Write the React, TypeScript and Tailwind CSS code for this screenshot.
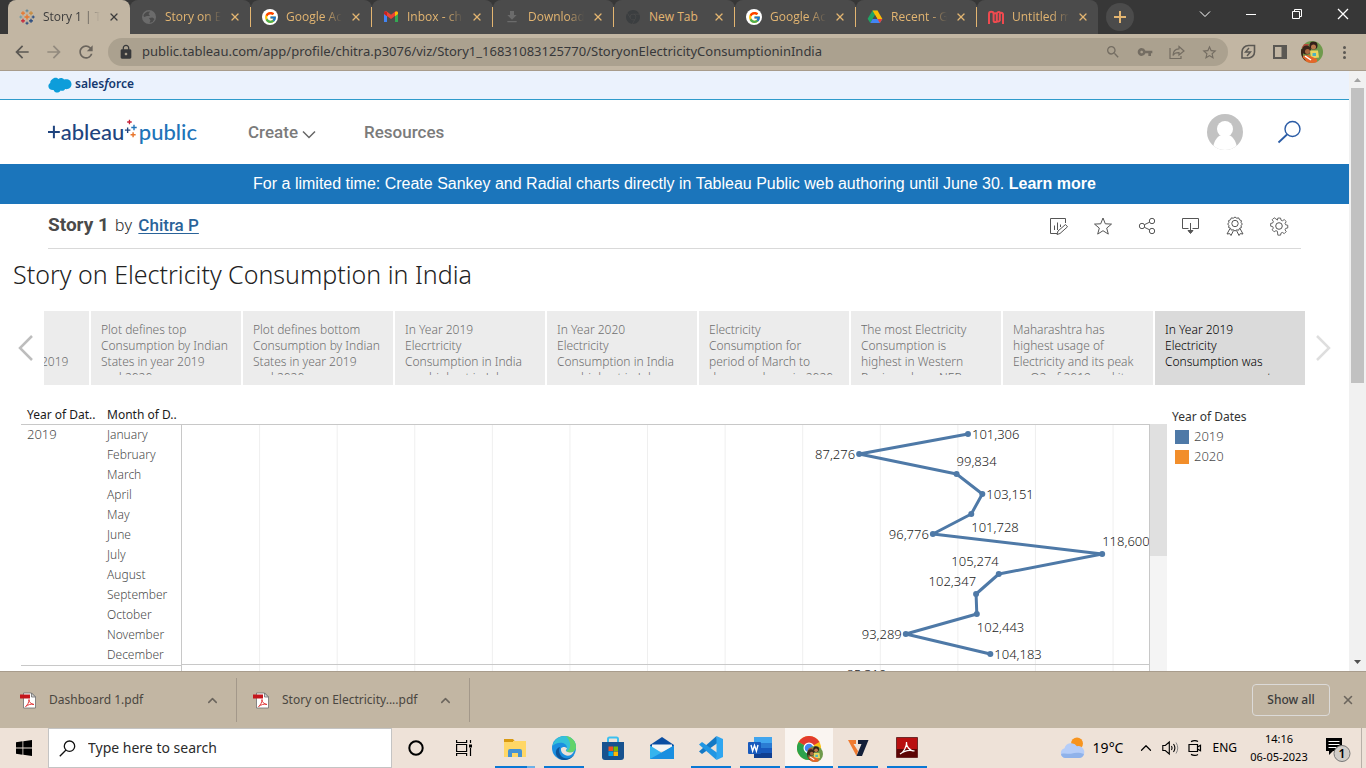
import type { ReactNode } from "react";
import { FcGoogle } from "react-icons/fc";
import { MdLock, MdSearch, MdVpnKey, MdStarBorder, MdFileDownload, MdRefresh, MdArrowBack, MdArrowForward } from "react-icons/md";
import { SiGooglechrome } from "react-icons/si";
import { ChevronUp, X } from "lucide-react";

/* ---------- browser chrome ---------- */

function Cross({ x, y, s, c, w = 1 }: { x: number; y: number; s: number; c: string; w?: number }) {
  return <path d={`M${x - s} ${y}H${x + s}M${x} ${y - s}V${y + s}`} stroke={c} strokeWidth={w} fill="none" />;
}

function TableauMark() {
  return (
    <svg width="16" height="16" viewBox="0 0 16 16" className="shrink-0" aria-hidden="true">
      <Cross x={8} y={8} s={2.5} c="#e8762d" w={1.4} />
      <Cross x={4} y={4.2} s={2} c="#e8762d" w={1.2} />
      <Cross x={12} y={4.2} s={2} c="#c78a3b" w={1.2} />
      <Cross x={4} y={11.8} s={2} c="#c72035" w={1.2} />
      <Cross x={12} y={11.8} s={2} c="#1f447e" w={1.2} />
      <Cross x={8} y={1.8} s={1.5} c="#5b879b" />
      <Cross x={8} y={14.2} s={1.5} c="#1f447e" />
      <Cross x={1.8} y={8} s={1.5} c="#7199a6" />
      <Cross x={14.2} y={8} s={1.5} c="#1f447e" />
    </svg>
  );
}

function Globe() {
  return (
    <svg width="16" height="16" viewBox="0 0 16 16" aria-hidden="true">
      <circle cx="8" cy="8" r="7" fill="#6b6b6b" />
      <path d="M2.500 6.500C4 3 6.500 2.500 9 2.500L7.500 5l1.500 2H6L3 8ZM8 9l3.500-.5 2 1.500-2 3-3 1 1-2.500Z" fill="#4b4b4b" />
    </svg>
  );
}

function GoogleDisc() {
  return (
    <span className="flex size-4 items-center justify-center rounded-full bg-white">
      <FcGoogle size={13} />
    </span>
  );
}

function Gmail() {
  return (
    <svg width="16" height="16" viewBox="0 0 16 16" aria-hidden="true">
      <path d="M1 4.500V13h3V6.500Z" fill="#4285f4" />
      <path d="M15 4.500V13h-3V6.500Z" fill="#34a853" />
      <path d="M1 3.800C1 2.300 2.700 1.700 3.800 2.500L8 5.700l4.200-3.200C13.300 1.700 15 2.300 15 3.800v1L8 10 1 4.800Z" fill="#ea4335" />
      <path d="M12 3v4.200l3-2.300V3.800C15 2.300 13 2 12 3Z" fill="#fbbc04" />
      <path d="M4 3v4.200L1 4.900V3.800C1 2.300 3 2 4 3Z" fill="#c5221f" />
    </svg>
  );
}

function Drive() {
  return (
    <svg width="16" height="16" viewBox="0 0 16 16" aria-hidden="true">
      <path d="M5.500 1.500h5L8 6 3.300 14 .6 9.800Z" fill="#21a464" />
      <path d="M10.500 1.500 15.400 10h-5L5.500 1.500Z" fill="#fbbc04" />
      <path d="M3.300 14 5.600 10h9.800l-2.500 4Z" fill="#4285f4" />
      <path d="m12.900 14 2.500-4h-4.900Z" fill="#ea4335" />
      <path d="M8 6.200 10.200 10H5.800Z" fill="#4b4b4b" />
    </svg>
  );
}

function MLogo() {
  return (
    <svg width="18" height="16" viewBox="0 0 18 16" className="shrink-0" aria-hidden="true">
      <path d="M2 15V5a2.300 2.300 0 0 1 4.600 0v6.500a1.600 1.600 0 0 0 3.200 0V5a2 2 0 0 1 3.400-1.400M6.600 5a2 2 0 0 1 3.200 0M9.800 11.500a1.600 1.600 0 0 0 3 0V5A1.700 1.700 0 0 1 16 5v10" fill="none" stroke="#ef4a4f" strokeWidth="2" />
    </svg>
  );
}

const tabs: { label: string; icon: ReactNode }[] = [
  { label: "Story on Electricity", icon: <Globe /> },
  { label: "Google Account", icon: <GoogleDisc /> },
  { label: "Inbox - chitra", icon: <Gmail /> },
  { label: "Downloads", icon: <MdFileDownload size={16} color="#6b6b6b" /> },
  { label: "New Tab", icon: <SiGooglechrome size={14} color="#3b3e40" /> },
  { label: "Google Account", icon: <GoogleDisc /> },
  { label: "Recent - Google Drive", icon: <Drive /> },
  { label: "Untitled mural", icon: <MLogo /> },
];

const fade = "min-w-0 flex-1 overflow-hidden whitespace-nowrap [mask-image:linear-gradient(to_right,black_70%,transparent_100%)]";

function TabStrip() {
  return (
    <div className="flex h-[34px] shrink-0 items-stretch bg-[#373737] pl-2 font-['Open_Sans','Noto_Sans',sans-serif] text-xs">
      <div className="flex w-[122px] items-center gap-2 rounded-t-lg bg-[#c2b6a3] pr-[10px] pl-[11px] text-[#3c3c3c]">
        <TableauMark />
        <span className={fade}>Story 1 | Tableau</span>
        <button aria-label="Close tab">
          <X size={12} strokeWidth={2.600} />
        </button>
      </div>
      {tabs.map((t, i) => (
        <div key={i} className="flex w-[121px] items-center rounded-t-lg bg-[#4b4b4b] text-[#e3b571]">
          <div className={"flex h-5 min-w-0 flex-1 items-center gap-2 pr-[9px] pl-[11px] " + (i < tabs.length - 1 ? "border-r border-[#e3b571]" : "")}>
            <span className="flex w-4 shrink-0 justify-center">{t.icon}</span>
            <span className={t.label.length > 8 ? fade : "flex-1 whitespace-nowrap"}>{t.label}</span>
            <button aria-label="Close tab">
              <X size={12} strokeWidth={2.600} />
            </button>
          </div>
        </div>
      ))}
      <button aria-label="New tab" className="ml-2 flex size-7 items-center justify-center self-center rounded-full bg-[#4b4b4b]">
        <svg width="14" height="14" viewBox="0 0 14 14">
          <path d="M1 7h12M7 1v12" stroke="#e3b571" strokeWidth="2" />
        </svg>
      </button>
      <div className="ml-auto flex items-start pt-2 text-white">
        <button aria-label="Search tabs" className="flex h-3 w-[46px] items-center justify-center">
          <svg width="12" height="12" viewBox="0 0 12 12"><path d="m1 3.500 5 5 5-5" fill="none" stroke="currentColor" /></svg>
        </button>
        <button aria-label="Minimize" className="flex h-3 w-[46px] items-center justify-center">
          <svg width="12" height="12" viewBox="0 0 12 12"><path d="M1 6.500h10" stroke="currentColor" /></svg>
        </button>
        <button aria-label="Restore" className="flex h-3 w-[46px] items-center justify-center">
          <svg width="12" height="12" viewBox="0 0 12 12"><path d="M1.500 3.500h7v7h-7ZM3.500 3.500v-2h7v7h-2" fill="none" stroke="currentColor" /></svg>
        </button>
        <button aria-label="Close" className="flex h-3 w-[46px] items-center justify-center">
          <svg width="12" height="12" viewBox="0 0 12 12"><path d="m1 1 10 10M11 1 1 11" stroke="currentColor" strokeWidth="1.300" /></svg>
        </button>
      </div>
    </div>
  );
}

function Photo({ size }: { size: number }) {
  return (
    <svg width={size} height={size} viewBox="0 0 22 22" aria-hidden="true">
      <clipPath id={`photo${size}`}><circle cx="11" cy="11" r="11" /></clipPath>
      <g clipPath={`url(#photo${size})`}>
        <rect width="22" height="22" fill="#6f9a4c" />
        <path d="M0 3h8l-2 4H0Z" fill="#b54a3a" />
        <circle cx="5.500" cy="9" r="4.500" fill="#3a2419" />
        <circle cx="6.500" cy="10.500" r="2.500" fill="#a8693f" />
        <circle cx="12.500" cy="4.500" r="4" fill="#33211a" />
        <circle cx="12.500" cy="6" r="2.500" fill="#b97a4c" />
        <path d="M9 9.500h8l1 7-8 1Z" fill="#ead45f" />
        <path d="M11.500 12h3.500v3h-3.500Z" fill="#4fb3c0" />
        <path d="M1 15l6-1 9 4v4H3Z" fill="#e5662a" />
        <path d="M4 15l6 4" stroke="#fff" strokeWidth="1.500" />
        <path d="M1 8v9l3 3" stroke="#3a2419" strokeWidth="2" fill="none" />
      </g>
    </svg>
  );
}

function Toolbar() {
  return (
    <div className="flex h-[37px] shrink-0 items-center border-b border-[#a89c8c] bg-[#c2b6a3] pr-[14px] pl-3 text-[#6b655d]">
      <div className="flex items-center gap-[12px]">
        <button aria-label="Back" className="flex w-5 justify-center text-[#5b5853]"><MdArrowBack size={20} /></button>
        <button aria-label="Forward" className="flex w-5 justify-center text-[#928a7e]"><MdArrowForward size={20} /></button>
        <button aria-label="Reload" className="flex w-5 justify-center"><MdRefresh size={20} /></button>
      </div>
      <div className="ml-3 flex h-7 min-w-0 flex-1 items-center rounded-full bg-[#aba18f] pr-[10px] pl-[10px]">
        <MdLock size={16} className="shrink-0 text-[#37383a]" />
        <input
          aria-label="Address"
          readOnly
          value="public.tableau.com/app/profile/chitra.p3076/viz/Story1_16831083125770/StoryonElectricityConsumptioninIndia"
          className="ml-2 min-w-0 flex-1 bg-transparent text-[13px] text-[#37383a] outline-none"
        />
        <div className="flex items-center gap-4 text-[#746d62]">
          <MdSearch size={16} />
          <MdVpnKey size={16} />
          <svg width="16" height="16" viewBox="0 0 16 16" fill="none" stroke="currentColor" strokeWidth="1.200">
            <path d="M1 4v10.500h11V12" />
            <path d="M10 2.500 15 7l-5 4V8.700C7 8.600 5 9.500 4 11.500 4 8 6 5 10 4.800Z" />
          </svg>
          <MdStarBorder size={17} />
        </div>
      </div>
      <div className="ml-3 flex items-center gap-4">
        <svg width="16" height="16" viewBox="0 0 16 16" fill="none" stroke="#5b5853" strokeWidth="1.600">
          <path d="M14.500 1.500v6.500a6 6 0 0 1-6.500 6H2V8a6.500 6.500 0 0 1 6.500-6.500Z" />
          <path d="m9 4-3.500 4h5L7 12" strokeWidth="1.400" />
        </svg>
        <svg width="16" height="16" viewBox="0 0 16 16" fill="none" stroke="#5b5853" strokeWidth="2">
          <path d="M2 2h12v12H2Z" />
          <path d="M11.500 2v12" strokeWidth="4" />
        </svg>
        <button aria-label="Profile" className="-mx-[3px]"><Photo size={22} /></button>
        <button aria-label="Menu" className="flex w-4 flex-col items-center gap-[2px]">
          <span className="size-[3px] rounded-full bg-[#5b5853]" />
          <span className="size-[3px] rounded-full bg-[#5b5853]" />
          <span className="size-[3px] rounded-full bg-[#5b5853]" />
        </button>
      </div>
    </div>
  );
}

/* ---------- page header ---------- */

function SalesforceBar() {
  return (
    <div className="flex h-[29px] items-center gap-[3px] border-b border-[#2f9bcb] bg-[#ebf2fd] px-12">
      <svg width="24" height="16" viewBox="0 0 24 16" className="mb-[1px]" aria-hidden="true">
        <path d="M4 2.500C6 .2 9 .4 10.400 2.100 12 .6 15 .8 16 2.600c3.500-1.300 7.500.6 7.500 4.600 0 3.500-3.300 5.500-6.300 4.800-1 1.800-3 2.200-4.600 1.500C11 16.400 6.800 16.300 5.600 13 2.500 13.300.3 11.500.4 9 .4 7.500 1.200 6.500 2.300 5.900 2 4.600 2.800 3.300 4 2.500Z" fill="#0d9dda" />
      </svg>
      <span className="mb-[2px] text-xs font-semibold text-[#14386f]">
        sales<i>f</i>orce
      </span>
    </div>
  );
}

function TableauLogo() {
  return (
    <a href="#home" aria-label="Tableau Public" className="flex w-[149px] items-center font-['Lato','Noto_Sans',sans-serif] text-[22px] leading-7 font-medium">
      <svg width="14" height="20" viewBox="0 0 14 20" aria-hidden="true">
        <path d="M0 10h13M6.500 3v14" stroke="#1f447e" strokeWidth="2.200" fill="none" />
      </svg>
      <span className="text-[#1f447e]">ableau</span>
      <svg width="16" height="28" viewBox="0 0 16 28" aria-hidden="true">
        <Cross x={6} y={3} s={2.5} c="#c72035" w={1.4} />
        <Cross x={4} y={12} s={3} c="#1f447e" w={1.5} />
        <Cross x={11} y={9} s={3} c="#2073b8" w={1.5} />
        <Cross x={10} y={17} s={2.8} c="#e8762d" w={1.6} />
      </svg>
      <span className="text-[#2073b8]">public</span>
    </a>
  );
}

function SiteHeader() {
  return (
    <header className="flex h-16 items-center px-12">
      <TableauLogo />
      <nav className="ml-[51px] flex items-center gap-12 pt-px font-['Roboto',sans-serif] text-[17px] font-medium text-[#7b7b7b]">
        <button className="flex items-center gap-1">
          Create
          <svg width="14" height="10" viewBox="0 0 14 10" className="mt-1"><path d="m1 1.500 6 6 6-6" fill="none" stroke="#666" strokeWidth="1.500" /></svg>
        </button>
        <a href="#resources">Resources</a>
      </nav>
      <div className="ml-auto flex items-center gap-[34px]">
        <button aria-label="Account">
          <svg width="36" height="36" viewBox="0 0 36 36">
            <clipPath id="acct"><circle cx="18" cy="18" r="18" /></clipPath>
            <g clipPath="url(#acct)">
              <rect width="36" height="36" fill="#c2c2c2" />
              <circle cx="18" cy="15" r="8" fill="#fff" />
              <path d="M6 36c0-8 4-13 7-14.500h10C26 23 30 28 30 36Z" fill="#fff" />
            </g>
          </svg>
        </button>
        <button aria-label="Search">
          <svg width="24" height="24" viewBox="0 0 24 24" fill="none" stroke="#2a5ba5" strokeWidth="1.400">
            <circle cx="15.500" cy="9" r="7.500" />
            <path d="m10 14.500-8.500 8" strokeWidth="1.800" />
          </svg>
        </button>
      </div>
    </header>
  );
}

const toolIcons: { name: string; art: ReactNode }[] = [
  { name: "Edit", art: <><path d="M8 17.500H1.500v-15h15V7" /><path d="M5.500 14V9.500M8.500 14V6.500M11.500 11V8.500" /><path d="m8 18.500 1-3.500 7.500-6.500 2 2.300L11 17.500Z" /></> },
  { name: "Favorite", art: <path d="m10 2 2.300 5.800 6.200.3-4.800 4 1.600 6-5.300-3.400-5.300 3.400 1.600-6-4.800-4 6.200-.3Z" /> },
  { name: "Share", art: <><circle cx="5" cy="10" r="2.700" /><circle cx="15" cy="5" r="2.700" /><circle cx="15" cy="15" r="2.700" /><path d="m7.400 8.700 5.200-2.500M7.400 11.300l5.200 2.500" /></> },
  { name: "Download", art: <><path d="M7.500 12.500h-6v-10h16v10h-6M9.500 7v9" /><path d="M7 14.500h5l-2.500 3Z" fill="#555" /></> },
  { name: "Nominate", art: <><circle cx="10" cy="7.500" r="3.200" /><path d="m10 1 1.700 1.200 2-.3.8 1.900 1.900.8-.3 2 1.200 1.400-1.200 1.600.3 2-1.900.7-.8 1.900-2-.3L10 15l-1.700-1.200-2 .3-.8-1.900-1.900-.7.3-2L2.700 8l1.200-1.400-.3-2 1.900-.8.8-1.900 2 .3Z" /><path d="m5 12.500-3 5.500 2.700-.4L6 19.500l2.500-5M15 12.500l3 5.500-2.700-.4L14 19.500l-2.500-5" /></> },
  { name: "Settings", art: <><circle cx="10" cy="10" r="3.300" /><path d="M8.500 1.500h3l.5 2.300 1.600.7 2-1.300 2.200 2.200-1.300 2 .7 1.600 2.300.5v3l-2.300.5-.7 1.600 1.300 2-2.200 2.200-2-1.300-1.600.7-.5 2.300h-3L8 16.200l-1.600-.7-2 1.300-2.200-2.200 1.300-2-.7-1.600-2.300-.5v-3l2.300-.5.7-1.600-1.300-2 2.200-2.200 2 1.300L8 3.800Z" transform="translate(1.200 .7) scale(.9)" /></> },
];

function VizBar() {
  return (
    <div className="px-12">
      <div className="flex h-[45px] items-center border-b border-[#d9d9d9] pr-3 font-['Roboto',sans-serif]">
        <h1 className="mb-[2px] text-[19px] font-bold text-[#4a4a4a]">Story 1</h1>
        <span className="ml-[6px] text-[17px] font-light text-[#333]">by</span>
        <a href="#author" className="ml-[6px] text-[17px] font-medium text-[#2a6399] underline underline-offset-2">Chitra P</a>
        <div className="ml-auto flex gap-6">
          {toolIcons.map((t) => (
            <button key={t.name} aria-label={t.name}>
              <svg width="20" height="20" viewBox="0 0 20 20" fill="none" stroke="#555" strokeWidth="1">{t.art}</svg>
            </button>
          ))}
        </div>
      </div>
    </div>
  );
}

/* ---------- story ---------- */

const points = [
  "Plot of the\nConsumption\nRegions for year 2019\nand 2020 in east",
  "Plot defines top\nConsumption by Indian\nStates in year 2019\nand 2020",
  "Plot defines bottom\nConsumption by Indian\nStates in year 2019\nand 2020",
  "In Year 2019\nElecrtricity\nConsumption in India\nwas highest in July",
  "In Year 2020\nElectricity\nConsumption in India\nwas highest in July",
  "Electricity\nConsumption for\nperiod of March to\ndecreased was in 2020",
  "The most Electricity\nConsumption is\nhighest in Western\nRegion where NER",
  "Maharashtra has\nhighest usage of\nElectricity and its peak\non Q2 of 2019 and its",
  "In Year 2019\nElectricity\nConsumption was\nmore on average at",
];

function StoryPoints() {
  return (
    <div className="flex h-[74px] items-center">
      <button aria-label="Previous" className="flex w-11 shrink-0 justify-center pl-2">
        <svg width="16" height="28" viewBox="0 0 16 28"><path d="M14 2 2 14l12 12" fill="none" stroke="#bdbdbd" strokeWidth="2.500" /></svg>
      </button>
      <div className="flex h-full min-w-0 flex-1 justify-end gap-[2px] overflow-hidden">
        {points.map((p, i) => (
          <button
            key={i}
            className={"h-full w-[150px] shrink-0 pt-[11px] pl-[10px] text-left " + (i === points.length - 1 ? "bg-[#dadada] text-black" : "bg-[#ececec] text-[#6e6e6e]")}
          >
            <span className="block h-full">
              <span className="block h-[53px] overflow-hidden text-xs leading-4 font-light whitespace-pre">{p}</span>
            </span>
          </button>
        ))}
      </div>
      <button aria-label="Next" className="flex w-11 shrink-0 justify-center pr-2">
        <svg width="16" height="28" viewBox="0 0 16 28"><path d="m2 2 12 12L2 26" fill="none" stroke="#dedede" strokeWidth="2.500" /></svg>
      </button>
    </div>
  );
}

type Anchor = "start" | "end";
const axisMax = 124700;
const data: { month: string; value: number; dx: number; dy: number; anchor: Anchor }[] = [
  { month: "January", value: 101306, dx: 4, dy: 0, anchor: "start" },
  { month: "February", value: 87276, dx: -4, dy: 0, anchor: "end" },
  { month: "March", value: 99834, dx: 0, dy: -13, anchor: "start" },
  { month: "April", value: 103151, dx: 4, dy: 0, anchor: "start" },
  { month: "May", value: 101728, dx: 0, dy: 13, anchor: "start" },
  { month: "June", value: 96776, dx: -4, dy: 0, anchor: "end" },
  { month: "July", value: 118600, dx: 0, dy: -13, anchor: "start" },
  { month: "August", value: 105274, dx: 0, dy: -13, anchor: "end" },
  { month: "September", value: 102347, dx: 0, dy: -13, anchor: "end" },
  { month: "October", value: 102443, dx: 0, dy: 13, anchor: "start" },
  { month: "November", value: 93289, dx: -4, dy: 0, anchor: "end" },
  { month: "December", value: 104183, dx: 4, dy: 0, anchor: "start" },
];
const grid = [1, 2, 3, 4, 5, 6, 7, 8, 9, 10, 11, 12];
const px = (v: number) => `${(v / axisMax) * 100}%`;
const py = (i: number) => 9 + i * 20;

function Chart() {
  return (
    <svg width="100%" height="246" className="block text-[13px] font-light">
      {grid.map((g) => (
        <line key={g} x1={px(g * 10000)} x2={px(g * 10000)} y1="0" y2="246" stroke="#efefef" strokeWidth="1" />
      ))}
      {data.slice(1).map((d, i) => (
        <line key={d.month} x1={px(data[i].value)} y1={py(i)} x2={px(d.value)} y2={py(i + 1)} stroke="#4e79a7" strokeWidth="3" strokeLinecap="round" />
      ))}
      {data.map((d, i) => (
        <circle key={d.month} cx={px(d.value)} cy={py(i)} r="3" fill="#4e79a7" />
      ))}
      {data.map((d, i) => (
        <text key={d.month} x={px(d.value)} y={py(i) + 5} dx={d.dx} dy={d.dy} textAnchor={d.anchor} fill="#1a1a1a">
          {d.value.toLocaleString("en-US")}
        </text>
      ))}
      <line x1="0" x2="100%" y1="239.500" y2="239.500" stroke="#c8c8c8" />
      <text x={px(90800)} y="254" textAnchor="end" fill="#1a1a1a">85,310</text>
    </svg>
  );
}

function Worksheet() {
  return (
    <div className="flex items-start pt-[22px] pr-[25px] pl-[21px]">
      <div className="flex min-w-0 flex-1">
        <table className="w-[160px] shrink-0 table-fixed border-collapse text-left text-[13px] font-light text-[#4a4a4a]">
          <thead>
            <tr className="h-[17px] border-b border-[#c8c8c8] text-xs leading-4 text-[#1a1a1a]">
              <th scope="col" className="w-20 p-0 pl-[6px] font-normal whitespace-nowrap">Year of Dat..</th>
              <th scope="col" className="w-20 p-0 pl-[6px] font-normal whitespace-nowrap">Month of D..</th>
            </tr>
          </thead>
          <tbody className="[&_td]:border-r [&_td]:border-[#c8c8c8]">
            {data.map((d, i) => (
              <tr key={d.month} className="h-5">
                {i === 0 && (
                  <th rowSpan={12} scope="rowgroup" className="p-0 pl-[6px] align-top leading-[18px] font-light">2019</th>
                )}
                <td className="p-0 pl-[6px] text-xs leading-5">{d.month}</td>
              </tr>
            ))}
            <tr className="h-5 border-t border-[#c8c8c8]">
              <th scope="row" className="p-0 pl-[6px] leading-5 font-light">2020</th>
              <td className="p-0 pl-[6px] text-xs leading-5">January</td>
            </tr>
          </tbody>
        </table>
        <div className="min-w-0 flex-1 pt-[17px]">
          <div className="border-t border-r border-[#c8c8c8]">
            <Chart />
          </div>
        </div>
      </div>
      <div className="mt-[17px] h-[300px] w-[17px] bg-[#f4f4f4]">
        <div className="h-[132px] bg-[#e0e0e0]" />
      </div>
      <aside className="w-[157px] pl-[5px] text-[13px] font-light text-[#4a4a4a]">
        <div className="text-xs leading-5 font-normal text-[#333]">Year of Dates</div>
        <ul>
          <li className="flex h-5 items-center gap-[5px] pl-[3px]"><span className="size-[14px] bg-[#4e79a7]" />2019</li>
          <li className="flex h-5 items-center gap-[5px] pl-[3px]"><span className="size-[14px] bg-[#f28e2b]" />2020</li>
        </ul>
      </aside>
    </div>
  );
}

function PageScrollbar() {
  return (
    <div className="flex w-[17px] shrink-0 flex-col items-center justify-between bg-[#f1f1f1]">
      <div className="flex w-full flex-col items-center">
        <svg width="17" height="17" viewBox="0 0 17 17"><path d="M5 11h7L8.500 7Z" fill="#a3a3a3" /></svg>
        <div className="h-[295px] w-[13px] bg-[#c1c1c1]" />
      </div>
      <svg width="17" height="17" viewBox="0 0 17 17"><path d="M5 6h7l-3.500 4Z" fill="#505050" /></svg>
    </div>
  );
}

/* ---------- downloads ---------- */

function PdfIcon() {
  return (
    <svg width="17" height="17" viewBox="0 0 17 17" className="shrink-0" aria-hidden="true">
      <path d="M3.500 1h8l4 4v11h-12Z" fill="#fff" stroke="#6d6d6d" strokeWidth=".8" />
      <path d="M11.500 1v4h4Z" fill="#d5d5d5" stroke="#6d6d6d" strokeWidth=".8" />
      <path d="M0 2.500h10v4H0Z" fill="#c5161c" />
      <path d="M5.500 14.500c2-1.500 3.500-4 3.500-7C8.800 10 11 12 14 12.500c-3-1-6 .3-8.500 2" fill="none" stroke="#e23b3b" strokeWidth="1" />
    </svg>
  );
}

function DownloadBar() {
  return (
    <div className="flex h-[57px] shrink-0 items-center border-t border-[#a89c8c] bg-[#c2b6a3] pr-[11px] text-xs text-[#4a4640]">
      {["Dashboard 1.pdf", "Story on Electricity....pdf"].map((f, i) => (
        <div key={f} className={"flex h-11 items-center border-r border-[#a3988a] pr-4 " + (i === 0 ? "w-[237px] pl-5" : "w-[233px] pl-4")}>
          <PdfIcon />
          <button className="ml-3 whitespace-nowrap">{f}</button>
          <button aria-label="More" className="ml-auto"><ChevronUp size={15} strokeWidth={2.400} color="#6b655d" /></button>
        </div>
      ))}
      <button className="ml-auto h-8 w-[78px] rounded-[4px] border border-[#dcdad8] text-xs font-medium text-[#3c3c3c]">Show all</button>
      <button aria-label="Dismiss" className="ml-[11px]"><X size={14} strokeWidth={2.600} color="#6b655d" /></button>
    </div>
  );
}

/* ---------- taskbar ---------- */

const apps: { name: string; bar: string; art: ReactNode }[] = [
  {
    name: "File Explorer", bar: "w-10",
    art: <><path d="M1 3h9l2 2.500H1Z" fill="#d99a11" /><path d="M1 5h22v16H1Z" fill="#ffd766" /><path d="M1 4h9v2H1Z" fill="#d99a11" /><path d="M5 21v-6q0-2 2-2h10q2 0 2 2v6h-4v-4H9v4Z" fill="#4593d4" /></>,
  },
  {
    name: "Edge", bar: "w-10",
    art: <><circle cx="12" cy="12" r="12" fill="#1b8fe0" /><path d="M.5 10C2 3.500 7 0 12.500 0 19 0 24 5 24 10.500c0 4-3 6-6 6-2.500 0-4-1-4-2 0-.7 1-1 1-2.800 0-3-3-5-6.500-5C5 6.700 2 8 .5 10Z" fill="#35c1d8" /><path d="M14 0C20 1 24 5.500 24 10.500c0 4-3 6-6 6-2-.1-3-1-3.500-1.600C19 14 20 6 14 0Z" fill="#62d36a" /><path d="M8 11c-1.500 3-1 8 3 10.500 4 2 8 1 11.500-3C20 22.500 16 24 12 24 6 23.500 3 19 4 15c.5-2 2-3.500 4-4Z" fill="#0d5499" /><path d="M9 12.500c1-2 5-2 6 0-.5 1-1.500 1.500-1 2.500 1 1.500 5 2 8 .5-2 4-6 5-9 3.500s-4.500-4-4-6.500Z" fill="#eee2d8" /></>,
  },
  {
    name: "Store", bar: "w-0",
    art: <><path d="M7 7V3q0-1.500 1.500-1.500h7Q17 1.500 17 3v4" fill="none" stroke="#3cc0f0" strokeWidth="2" /><path d="M1 6h22v15q0 3-3 3H4q-3 0-3-3Z" fill="#17528f" /><path d="M7.500 10.500H12V15H7.500Z" fill="#f25022" /><path d="M12.500 10.500H17V15h-4.500Z" fill="#7fba00" /><path d="M7.500 15.500H12V20H7.500Z" fill="#00a4ef" /><path d="M12.500 15.500H17V20h-4.500Z" fill="#ffb900" /></>,
  },
  {
    name: "Mail", bar: "w-0",
    art: <><path d="M0 9 12 1l12 8v4H0Z" fill="#0b4ea2" /><path d="M2 8.500h20V15H2Z" fill="#f4f4f4" /><path d="M0 9.500 12 17l12-7.500V23H0Z" fill="#35b4ee" /><path d="M0 23 24 9.500V23Z" fill="#1a8fe0" /></>,
  },
  {
    name: "Visual Studio Code", bar: "w-10",
    art: <><path d="M17.500 0 0 15.500 3 18 18.500 7Z" fill="#1478c4" /><path d="M17.500 24 0 8.500 3 6l15.500 11Z" fill="#2196e3" /><path d="m17.500 0 6.500 3v18l-6.500 3Z" fill="#2fa6f0" /></>,
  },
  {
    name: "Word", bar: "w-10",
    art: <><path d="M6 1h18v6H6Z" fill="#41a5ee" /><path d="M6 7h18v5H6Z" fill="#2b7cd3" /><path d="M6 12h18v5H6Z" fill="#185abd" /><path d="M6 17h18v5H6Z" fill="#103f91" /><rect y="6" width="13" height="12" rx="1" fill="#185abd" /><path d="m3 9 1.600 6L6.500 9.500 8.400 15 10 9" fill="none" stroke="#fff" strokeWidth="1.400" /></>,
  },
  {
    name: "Chrome", bar: "w-12",
    art: <><circle cx="12" cy="12" r="12" fill="#fbc116" /><path d="M12 12 1.600 6a12 12 0 0 1 20.800 0Z" fill="#e33b2e" /><path d="M12 12 1.600 6A12 12 0 0 0 12 24l5-9Z" fill="#2ba24c" /><circle cx="12" cy="12" r="5.500" fill="#fff" /><circle cx="12" cy="12" r="4.300" fill="#4285f4" /></>,
  },
  {
    name: "V7", bar: "w-10",
    art: <><path d="M2 4h8v4H7.500L12 15l-1.500 5Z" fill="#ef7a30" /><path d="M12 4h10.500L16 20h-5.500l5-12H12Z" fill="#14203a" /></>,
  },
  {
    name: "Acrobat", bar: "w-10",
    art: <><path d="M1.500 1.500h21v20h-21Z" fill="#b90f10" stroke="#6d2a2a" /><path d="M2 13h20v8H2Z" fill="#5d0505" /><path d="M5 18c3-1 7-7 6.500-12-.5 4 3 9 8 9-5-1.500-10-.5-14.500 3" fill="none" stroke="#fff" strokeWidth="1.200" /></>,
  },
];

function Taskbar() {
  return (
    <div className="flex h-10 shrink-0 items-stretch bg-[#eee2d8] text-black">
      <button aria-label="Start" className="flex w-12 items-center justify-center">
        <svg width="16" height="16" viewBox="0 0 16 16"><path d="M0 2.300 6.500 1.300V7.600H0ZM7.300 1.200 16 0v7.600H7.300ZM0 8.400h6.500v6.300L0 13.700ZM7.300 8.400H16V16l-8.700-1.200Z" /></svg>
      </button>
      <label className="flex w-[344px] items-center gap-3 border border-[#c4c4c4] bg-white pl-[10px]">
        <svg width="17" height="17" viewBox="0 0 17 17" fill="none" stroke="#111" strokeWidth="1.300"><circle cx="10.500" cy="6.200" r="5.200" /><path d="M7 10 .8 16.200" /></svg>
        <input aria-label="Search" placeholder="Type here to search" className="min-w-0 flex-1 bg-transparent text-sm outline-none placeholder:text-[#2b2b2b]" />
      </label>
      <button aria-label="Cortana" className="flex w-12 items-center justify-center">
        <svg width="16" height="16" viewBox="0 0 16 16"><circle cx="8" cy="8" r="6.700" fill="none" stroke="#000" strokeWidth="2" /></svg>
      </button>
      <button aria-label="Task view" className="flex w-12 items-center justify-center">
        <svg width="16" height="16" viewBox="0 0 16 16" fill="none" stroke="#000" strokeWidth="1.200"><path d="M.6 0v2.500h10V0M.6 16v-2.500h10V16M.6 4.500h10v7H.6ZM14.500 0v3M14.500 8v8" /><path d="M13 4.500h3v3h-3Z" fill="#000" stroke="none" /></svg>
      </button>
      <div className="ml-[3px] flex gap-px">
        {apps.map((a) => (
          <button key={a.name} aria-label={a.name} className={"relative flex w-12 flex-col items-center justify-between " + (a.name === "Chrome" ? "bg-[#faf5f1]" : "")}>
            <svg width="24" height="24" viewBox="0 0 24 24" className="mt-2">{a.art}</svg>
            {a.name === "Chrome" && <span className="absolute right-[10px] bottom-[6px]"><Photo size={16} /></span>}
            <span className={"flex h-[2px] justify-end bg-[#0a78d4] " + a.bar}>
              {a.name === "File Explorer" && <span className="h-full w-2 bg-[#6bb0e8]" />}
            </span>
          </button>
        ))}
      </div>
      <div className="ml-auto flex items-center text-xs">
        <svg width="25" height="22" viewBox="0 0 25 22" aria-hidden="true">
          <circle cx="17" cy="6.500" r="6" fill="#f7941e" />
          <path d="M5.500 21a5 5 0 0 1-1-9.800 7 7 0 0 1 12.500-2 6 6 0 0 1 2.500 11.800Z" fill="#b5cdf8" />
          <path d="M5.500 21a5 5 0 0 1-4.500-4c4-1.500 8 .5 11-.5s8-1 12 .5a5.500 5.500 0 0 1-5 4Z" fill="#8fb2ea" />
        </svg>
        <span className="ml-2 text-sm">19°C</span>
        <button aria-label="Hidden icons" className="ml-[14px]"><ChevronUp size={18} strokeWidth={1.600} /></button>
        <svg width="17" height="16" viewBox="0 0 17 16" fill="none" stroke="#000" className="ml-[7px]"><path d="M.8 5.500v5h2.500l4 3.500V2l-4 3.500ZM9.500 6q1.200 2 0 4M11.500 4q2.800 4 0 8" strokeWidth="1.100" /><path d="M14 2.500q3.500 5.500 0 11" stroke="#888" /></svg>
        <svg width="14" height="16" viewBox="0 0 14 16" fill="none" stroke="#000" strokeWidth="1.200" className="ml-[9px]"><path d="M1 4.500h8.500v7H1ZM9.500 7l3-1.800v5.600L9.500 9M3 1.600Q7-.4 10 1.600M3 14.400q4 2 7 0" /></svg>
        <span className="ml-[10px]">ENG</span>
        <div className="ml-2 flex w-[68px] flex-col items-center text-[11px] leading-[18px] whitespace-nowrap">
          <span>14:16</span>
          <span>06-05-2023</span>
        </div>
        <button aria-label="Notifications" className="ml-3 flex pt-[2px]">
          <svg width="26" height="26" viewBox="0 0 26 26">
            <path d="M1 2h16v13H8l-4 4v-4H1Z" />
            <path d="M3.500 5.500h11M3.500 8.500h11M3.500 11.500h8" stroke="#fff" />
            <circle cx="17" cy="17.500" r="8" fill="#d0ccc8" stroke="#777" />
            <text x="17" y="22" textAnchor="middle" className="text-xs font-semibold">1</text>
          </svg>
        </button>
        <span className="ml-[10px] h-10 w-[5px] border-l border-[#b8b0a8]" />
      </div>
    </div>
  );
}

export default function App() {
  return (
    <div className="flex h-screen flex-col overflow-hidden bg-white font-['Noto_Sans','Open_Sans',sans-serif]">
      <TabStrip />
      <Toolbar />
      <div className="flex min-h-0 flex-1">
        <main className="min-w-0 flex-1 overflow-hidden">
          <SalesforceBar />
          <SiteHeader />
          <a href="#learn" className="flex h-10 items-center justify-center bg-[#1b75bb] font-['Liberation_Sans',Arial,sans-serif] text-base text-white">
            <span>
              For a limited time: Create Sankey and Radial charts directly in Tableau Public web authoring until June 30. <b>Learn more</b>
            </span>
          </a>
          <VizBar />
          <h2 className="flex h-[62px] items-center pb-[10px] pl-[13px] text-[25px] font-light text-[#222]">Story on Electricity Consumption in India</h2>
          <StoryPoints />
          <Worksheet />
        </main>
        <PageScrollbar />
      </div>
      <DownloadBar />
      <Taskbar />
    </div>
  );
}
